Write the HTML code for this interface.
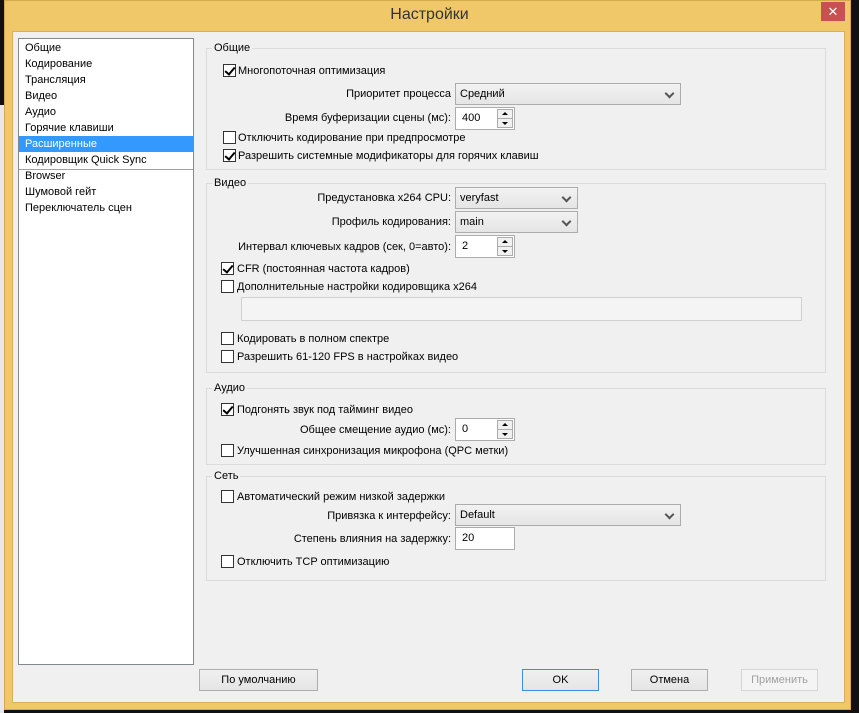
<!DOCTYPE html>
<html><head><meta charset="utf-8"><style>
*{margin:0;padding:0;box-sizing:border-box}
body{width:859px;height:713px;background:#111;position:relative;overflow:hidden;font-family:"Liberation Sans","DejaVu Sans",sans-serif;font-size:11px;color:#000}
.a{position:absolute}
.win{left:4px;top:0;width:847px;height:710px;background:#f0c86a;border:1px solid #d4a94a}
.title{left:0;width:859px;top:6px;text-align:center;font-size:16px;color:#333}
.close{left:821px;top:2px;width:24px;height:19px;background:#c75050;color:#fff;font-size:13px;text-align:center;line-height:19px}
.client{left:12px;top:31px;width:833px;height:672px;background:#f0f0f0;border:1px solid #d9b05a}
.list{left:18px;top:38px;width:176px;height:627px;background:#fff;border:1px solid #828790}
.it{position:absolute;left:6px;height:16px;line-height:16px;white-space:nowrap}
.grp{border:1px solid #dcdcdc;left:206px;width:620px}
.gl{background:#f0f0f0;padding:0 2px;left:212px;line-height:13px}
.cb{width:13px;height:13px;border:1px solid #333;background:#fff;left:223px}
.cb.c::after{content:"";position:absolute;left:3px;top:0px;width:4px;height:8px;border:solid #000;border-width:0 2px 2px 0;transform:rotate(40deg)}
.lb{line-height:14px;white-space:nowrap}
.rl{right:408px;line-height:14px;white-space:nowrap;text-align:right}
.combo{left:455px;height:22px;border:1px solid #acacac;background:linear-gradient(#f2f2f2,#e5e5e5);padding-left:4px;line-height:20px}
.combo::after{content:"";position:absolute;right:7px;top:6px;width:5px;height:5px;border:solid #555;border-width:0 2px 2px 0;transform:rotate(45deg)}
.spin{left:455px;width:60px;height:23px;border:1px solid #acacac;background:#fff;padding-left:6px;line-height:20px}
.sb{position:absolute;right:1px;width:16px;height:10px;border:1px solid #acacac;background:#f0f0f0}
.sb.u{top:1px}.sb.d{bottom:1px}
.sb.u::after{content:"";position:absolute;left:4px;top:2px;border:3px solid transparent;border-bottom:3px solid #000;border-top:0}
.sb.d::after{content:"";position:absolute;left:4px;top:3px;border:3px solid transparent;border-top:3px solid #000;border-bottom:0}
.field{border:1px solid #d0d0d0;background:#f4f4f4}
.btn{top:669px;height:22px;border:1px solid #adadad;background:linear-gradient(#f0f0f0,#e5e5e5);text-align:center;line-height:20px}
</style></head><body>
<div class="a" style="left:0;top:105px;width:4px;height:608px;background:#e8e8e8"></div>
<div class="a win"></div>
<div class="a title">Настройки</div>
<div class="a close">✕</div>
<div class="a client"></div>
<div class="a list">
<div class="it" style="top:1px">Общие</div>
<div class="it" style="top:17px">Кодирование</div>
<div class="it" style="top:33px">Трансляция</div>
<div class="it" style="top:49px">Видео</div>
<div class="it" style="top:65px">Аудио</div>
<div class="it" style="top:81px">Горячие клавиши</div>
<div class="a" style="left:0;top:97px;width:174px;height:16px;background:#3399ff"></div>
<div class="it" style="top:97px;color:#fff">Расширенные</div>
<div class="it" style="top:113px">Кодировщик Quick Sync</div>
<div class="a" style="left:0;top:130px;width:174px;height:1px;background:#a0a0a0"></div>
<div class="it" style="top:129px">Browser</div>
<div class="it" style="top:145px">Шумовой гейт</div>
<div class="it" style="top:161px">Переключатель сцен</div>
</div>

<div class="a grp" style="top:48px;height:122px"></div>
<div class="a gl" style="top:42px">Общие</div>
<div class="a cb c" style="top:64px"></div><div class="a lb" style="left:238px;top:64px">Многопоточная оптимизация</div>
<div class="a rl" style="top:87px">Приоритет процесса</div>
<div class="a combo" style="top:83px;width:226px">Средний</div>
<div class="a rl" style="top:111px">Время буферизации сцены (мс):</div>
<div class="a spin" style="top:107px">400<div class="sb u"></div><div class="sb d"></div></div>
<div class="a cb" style="top:131px"></div><div class="a lb" style="left:238px;top:131px">Отключить кодирование при предпросмотре</div>
<div class="a cb c" style="top:149px"></div><div class="a lb" style="left:238px;top:149px">Разрешить системные модификаторы для горячих клавиш</div>

<div class="a grp" style="top:183px;height:190px"></div>
<div class="a gl" style="top:177px">Видео</div>
<div class="a rl" style="top:191px">Предустановка x264 CPU:</div>
<div class="a combo" style="top:187px;width:123px">veryfast</div>
<div class="a rl" style="top:215px">Профиль кодирования:</div>
<div class="a combo" style="top:211px;width:123px">main</div>
<div class="a rl" style="top:240px">Интервал ключевых кадров (сек, 0=авто):</div>
<div class="a spin" style="top:235px">2<div class="sb u"></div><div class="sb d"></div></div>
<div class="a cb c" style="top:262px;left:221px"></div><div class="a lb" style="left:237px;top:262px">CFR (постоянная частота кадров)</div>
<div class="a cb" style="top:280px;left:221px"></div><div class="a lb" style="left:237px;top:280px">Дополнительные настройки кодировщика x264</div>
<div class="a field" style="left:241px;top:297px;width:561px;height:24px"></div>
<div class="a cb" style="top:332px;left:221px"></div><div class="a lb" style="left:237px;top:332px">Кодировать в полном спектре</div>
<div class="a cb" style="top:350px;left:221px"></div><div class="a lb" style="left:237px;top:350px">Разрешить 61-120 FPS в настройках видео</div>

<div class="a grp" style="top:388px;height:77px"></div>
<div class="a gl" style="top:382px">Аудио</div>
<div class="a cb c" style="top:403px;left:221px"></div><div class="a lb" style="left:237px;top:403px">Подгонять звук под тайминг видео</div>
<div class="a rl" style="top:423px">Общее смещение аудио (мс):</div>
<div class="a spin" style="top:418px">0<div class="sb u"></div><div class="sb d"></div></div>
<div class="a cb" style="top:444px;left:221px"></div><div class="a lb" style="left:237px;top:444px">Улучшенная синхронизация микрофона (QPC метки)</div>

<div class="a grp" style="top:476px;height:105px"></div>
<div class="a gl" style="top:470px">Сеть</div>
<div class="a cb" style="top:490px;left:221px"></div><div class="a lb" style="left:237px;top:490px">Автоматический режим низкой задержки</div>
<div class="a rl" style="top:509px">Привязка к интерфейсу:</div>
<div class="a combo" style="top:504px;width:226px">Default</div>
<div class="a rl" style="top:532px">Степень влияния на задержку:</div>
<div class="a spin" style="top:527px;height:23px">20</div>
<div class="a cb" style="top:555px;left:221px"></div><div class="a lb" style="left:237px;top:555px">Отключить TCP оптимизацию</div>

<div class="a btn" style="left:199px;width:119px">По умолчанию</div>
<div class="a btn" style="left:522px;width:77px;border-color:#3c8fe0">OK</div>
<div class="a btn" style="left:631px;width:77px">Отмена</div>
<div class="a btn" style="left:741px;width:77px;border-color:#d5d5d5;background:#f4f4f4;color:#a0a0a0">Применить</div>
</body></html>
